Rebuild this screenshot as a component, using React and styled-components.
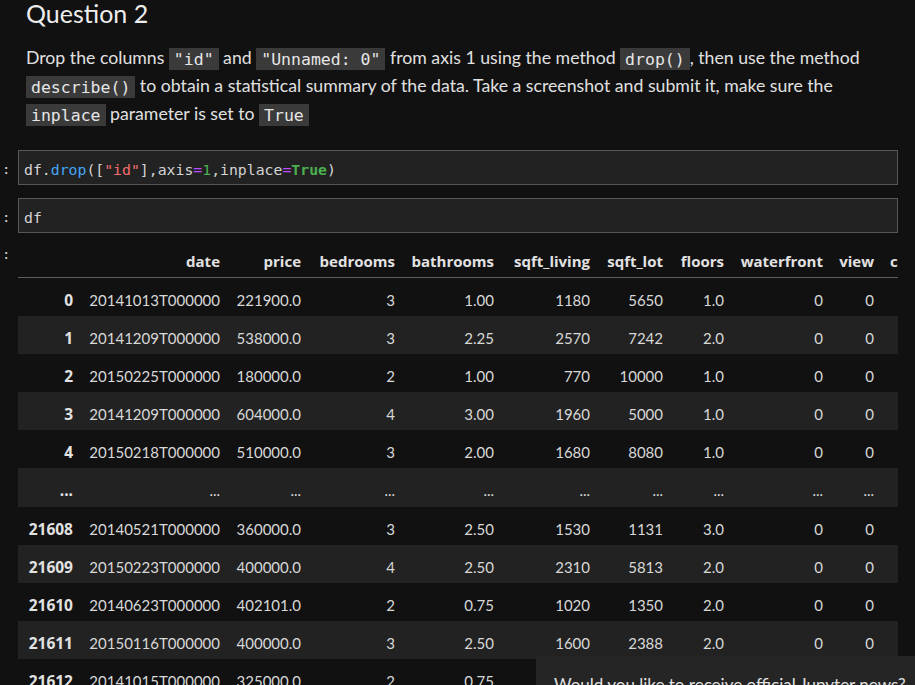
import styled, { createGlobalStyle } from "styled-components"

const GlobalStyle = createGlobalStyle`
  html, body {
    margin: 0;
    padding: 0;
    background: #111111;
  }
  body {
    font-family: Lato, "Open Sans", sans-serif;
    color: #e0e0e0;
  }
`

const columns = [
  { key: "index", label: "", width: 63 },
  { key: "date", label: "date", width: 147 },
  { key: "price", label: "price", width: 81 },
  { key: "bedrooms", label: "bedrooms", width: 94 },
  { key: "bathrooms", label: "bathrooms", width: 99 },
  { key: "sqft_living", label: "sqft_living", width: 96 },
  { key: "sqft_lot", label: "sqft_lot", width: 73 },
  { key: "floors", label: "floors", width: 61 },
  { key: "waterfront", label: "waterfront", width: 99 },
  { key: "view", label: "view", width: 51 },
  { key: "condition", label: "condition", width: 84 },
]

const rows = [
  ["0", "20141013T000000", "221900.0", "3", "1.00", "1180", "5650", "1.0", "0", "0", "3"],
  ["1", "20141209T000000", "538000.0", "3", "2.25", "2570", "7242", "2.0", "0", "0", "3"],
  ["2", "20150225T000000", "180000.0", "2", "1.00", "770", "10000", "1.0", "0", "0", "3"],
  ["3", "20141209T000000", "604000.0", "4", "3.00", "1960", "5000", "1.0", "0", "0", "5"],
  ["4", "20150218T000000", "510000.0", "3", "2.00", "1680", "8080", "1.0", "0", "0", "3"],
  ["...", "...", "...", "...", "...", "...", "...", "...", "...", "...", "..."],
  ["21608", "20140521T000000", "360000.0", "3", "2.50", "1530", "1131", "3.0", "0", "0", "3"],
  ["21609", "20150223T000000", "400000.0", "4", "2.50", "2310", "5813", "2.0", "0", "0", "3"],
  ["21610", "20140623T000000", "402101.0", "2", "0.75", "1020", "1350", "2.0", "0", "0", "3"],
  ["21611", "20150116T000000", "400000.0", "3", "2.50", "1600", "2388", "2.0", "0", "0", "3"],
  ["21612", "20141015T000000", "325000.0", "2", "0.75", "1020", "1076", "2.0", "0", "0", "3"],
]

function App() {
  return (
    <>
      <GlobalStyle />
      <Page>
        <CellRow>
          <Prompt />
          <Markdown>
            <Heading>Question 2</Heading>
            <Paragraph>
              Drop the columns <InlineCode>"id"</InlineCode> and{" "}
              <InlineCode>"Unnamed: 0"</InlineCode> from axis 1 using the method{" "}
              <InlineCode>drop()</InlineCode>, then use the method
              <br />
              <InlineCode>describe()</InlineCode> to obtain a statistical summary of the data. Take a
              screenshot and submit it, make sure the
              <br />
              <InlineCode>inplace</InlineCode> parameter is set to <InlineCode>True</InlineCode>
            </Paragraph>
          </Markdown>
        </CellRow>

        <CellRow gap={22}>
          <Prompt top={11}>:</Prompt>
          <Editor>
            df.<Tok c="#42a5f5">drop</Tok>([<Tok c="#f26d6d">"id"</Tok>],axis
            <Tok c="#b94dff">=</Tok>
            <Tok c="#4caf50">1</Tok>,inplace<Tok c="#b94dff">=</Tok>
            <Tok c="#4caf50" bold>
              True
            </Tok>
            )
          </Editor>
        </CellRow>

        <CellRow gap={13}>
          <Prompt top={11}>:</Prompt>
          <Editor>df</Editor>
        </CellRow>

        <CellRow gap={10}>
          <Prompt top={3}>:</Prompt>
          <TableClip>
            <Table>
              <colgroup>
                {columns.map(col => (
                  <col key={col.key} style={{ width: col.width }} />
                ))}
              </colgroup>
              <thead>
                <tr>
                  {columns.map(col => (
                    <HeadCell key={col.key}>{col.label}</HeadCell>
                  ))}
                </tr>
              </thead>
              <tbody>
                {rows.map((row, i) => (
                  <Row key={i} striped={i % 2 === 1 ? 1 : 0}>
                    {row.map((value, j) => (
                      <Cell key={j} index={j === 0 ? 1 : 0}>
                        {value}
                      </Cell>
                    ))}
                  </Row>
                ))}
              </tbody>
            </Table>
          </TableClip>
        </CellRow>

        <Toast>Would you like to receive official Jupyter news?</Toast>
      </Page>
    </>
  )
}

export default App

const Page = styled.div`
  position: relative;
  width: 915px;
  height: 685px;
  overflow: hidden;
  background: #111111;
`

const CellRow = styled.div`
  display: flex;
  margin-top: ${props => props.gap || 0}px;
`

const Prompt = styled.div`
  flex: none;
  width: 18px;
  box-sizing: border-box;
  padding: ${props => props.top || 0}px 0 0 2px;
  font-family: "DejaVu Sans Mono", monospace;
  font-size: 14px;
  line-height: 17px;
  color: #cfcfcf;
`

const Markdown = styled.div`
  width: 880px;
  box-sizing: border-box;
  padding-left: 8px;
`

const Heading = styled.h2`
  margin: 0;
  font-size: 25px;
  font-weight: 400;
  line-height: 26px;
  color: #ededed;
`

const Paragraph = styled.p`
  margin: 18px 0 0;
  font-size: 17.7px;
  line-height: 28px;
  color: #e0e0e0;
  white-space: nowrap;
`

const InlineCode = styled.code`
  padding: 1.5px 5px;
  font-family: "DejaVu Sans Mono", monospace;
  font-size: 16.5px;
  line-height: 1;
  color: #e6e6e6;
  background: #3a3a3a;
`

const Editor = styled.div`
  width: 880px;
  height: 35px;
  box-sizing: border-box;
  padding: 10px 5px 0;
  border: 1px solid #575757;
  background: #222222;
  font-family: "DejaVu Sans Mono", monospace;
  font-size: 14.8px;
  line-height: 17px;
  color: #d4d4d4;
  white-space: nowrap;
`

const Tok = styled.span`
  color: ${props => props.c};
  font-weight: ${props => (props.bold ? 700 : 400)};
`

const TableClip = styled.div`
  width: 880px;
  overflow: hidden;
`

const Table = styled.table`
  width: 948px;
  table-layout: fixed;
  border-collapse: separate;
  border-spacing: 0;
  font-size: 15px;
  line-height: 18px;
  color: #dcdcdc;
`

const HeadCell = styled.th`
  padding: 8.5px 8px 7.5px;
  border-bottom: 1px solid #5e5e5e;
  text-align: right;
  font-family: "Open Sans", Lato, sans-serif;
  font-weight: 700;
  color: #e2e2e2;
  white-space: nowrap;
`

const Row = styled.tr`
  background: ${props => (props.striped ? "#222222" : "transparent")};
`

const Cell = styled.td`
  padding: 13px 8px 7.1px;
  text-align: right;
  font-family: ${props => (props.index ? `"Open Sans", Lato, sans-serif` : "inherit")};
  font-size: ${props => (props.index ? "15.5px" : "15px")};
  font-weight: ${props => (props.index ? 700 : 400)};
  color: ${props => (props.index ? "#e2e2e2" : "#d8d8d8")};
  white-space: nowrap;
`

const Toast = styled.div`
  position: absolute;
  left: 536px;
  top: 656px;
  width: 400px;
  padding: 19px 18px;
  background: #252525;
  font-size: 17px;
  line-height: 20.4px;
  color: #e0e0e0;
  white-space: nowrap;
`
